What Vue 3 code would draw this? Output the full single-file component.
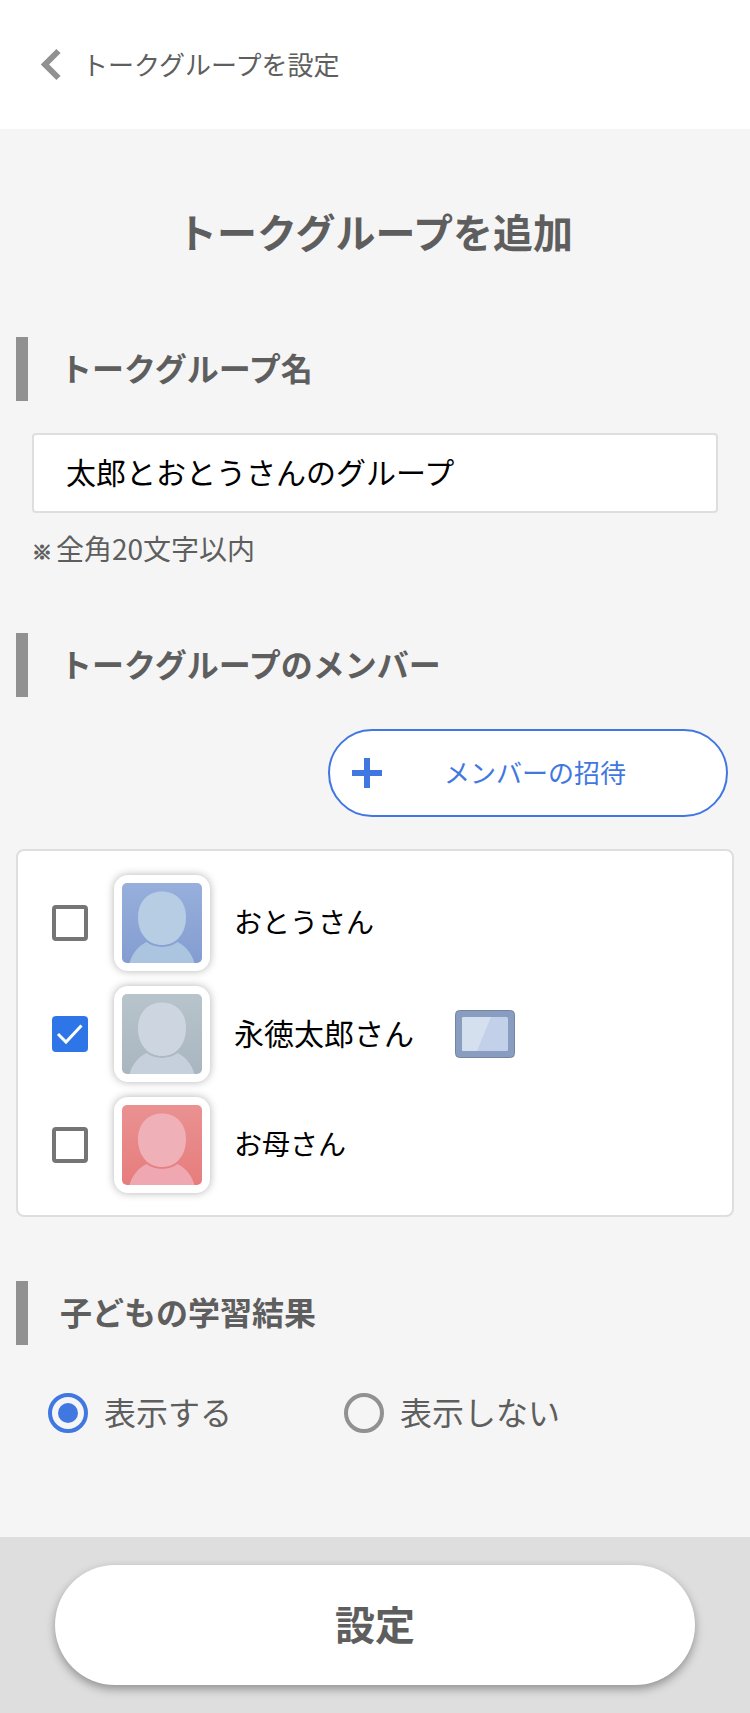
<script setup>
import { ref } from 'vue'

const groupName = ref('太郎とおとうさんのグループ')
const visibility = ref('show')
const members = ref([
  { id: 'father', name: 'おとうさん', checked: false, child: false, top: '#97afdb', bottom: '#849dd1', head: '#b6cde4', body: '#abc5e0' },
  { id: 'taro', name: '永徳太郎さん', checked: true, child: true, top: '#b8c4cc', bottom: '#a9b6bf', head: '#ccd5e0', body: '#c6d0dc' },
  { id: 'mother', name: 'お母さん', checked: false, child: false, top: '#ea9192', bottom: '#e67d7c', head: '#efb0b8', body: '#efa8b1' },
])
</script>

<template>
  <div class="page">
    <header class="topbar">
      <a class="back" href="#">
        <svg class="back-icon" viewBox="0 0 20 32" aria-hidden="true">
          <path d="M18.500 3 5 16.500l13.500 13.500" fill="none" stroke="#919191" stroke-width="6" />
        </svg>
        <span>トークグループを設定</span>
      </a>
    </header>

    <main class="content">
      <h1 class="title">トークグループを追加</h1>

      <section>
        <h2 class="heading"><label for="group-name">トークグループ名</label></h2>
        <div class="field">
          <input id="group-name" v-model="groupName" class="text-input" type="text" maxlength="20" />
          <p class="note"><span class="mark">※</span><span>全角20文字以内</span></p>
        </div>
      </section>

      <section class="members-section">
        <h2 class="heading">トークグループのメンバー</h2>
        <button class="invite" type="button">
          <svg class="plus" viewBox="0 0 30 30" aria-hidden="true">
            <path d="M12 0h6v12h12v6H18v12h-6V18H0v-6h12z" fill="#4177e1" />
          </svg>
          <span class="invite-label">メンバーの招待</span>
        </button>
        <ul class="members">
          <li v-for="m in members" :key="m.id" class="member">
            <input :id="m.id" v-model="m.checked" class="check" type="checkbox" />
            <label class="member-label" :for="m.id">
              <span class="avatar">
                <svg viewBox="0 0 80 80" aria-hidden="true">
                  <defs>
                    <linearGradient :id="`${m.id}-bg`" x1="0" y1="0" x2="0" y2="1">
                      <stop offset="0" :stop-color="m.top" />
                      <stop offset="1" :stop-color="m.bottom" />
                    </linearGradient>
                  </defs>
                  <rect width="80" height="80" rx="5" :fill="`url(#${m.id}-bg)`" />
                  <path d="M40 8.500C54 8.500 64 18.500 64 34C64 52 53 62 40 62S16 52 16 34C16 18.500 26 8.500 40 8.500z" :fill="m.head" />
                  <path d="M7.500 80C10 71 16 63 24.500 59c9 6.500 22 6.500 31 0C64 63 70 71 72.500 80z" :fill="m.body" />
                </svg>
              </span>
              <span class="name" :class="{ 'name-child': m.child }">{{ m.name }}</span>
            </label>
            <svg v-if="m.child" class="tablet" viewBox="0 0 60 48" role="img" aria-label="タブレット">
              <rect x="0.500" y="0.500" width="59" height="47" rx="4" fill="#889dbf" stroke="#74869f" />
              <rect x="7" y="7" width="46" height="34" rx="1.500" fill="#c2d1e9" />
              <path d="M8.500 7H36L22 41H8.500Q7 41 7 39.500v-31Q7 7 8.500 7z" fill="#d5e0ee" />
            </svg>
          </li>
        </ul>
      </section>

      <section class="result-section">
        <h2 id="result-heading" class="heading">子どもの学習結果</h2>
        <div class="radios" role="radiogroup" aria-labelledby="result-heading">
          <label class="radio"><input v-model="visibility" type="radio" name="visibility" value="show" /><span>表示する</span></label>
          <label class="radio"><input v-model="visibility" type="radio" name="visibility" value="hide" /><span>表示しない</span></label>
        </div>
      </section>
    </main>

    <footer class="footer">
      <button class="submit" type="button">設定</button>
    </footer>
  </div>
</template>

<style>
body {
  margin: 0;
  background: #f5f5f5;
}
</style>

<style scoped>
.page {
  display: flex;
  flex-direction: column;
  min-height: 100vh;
  color: #5e5e5e;
  background: #f5f5f5;
  font-family: "Noto Sans CJK JP", sans-serif;
}
.page * {
  box-sizing: border-box;
}
.page button,
.page input {
  font-family: inherit;
}
.topbar {
  padding: 44px 40px 45px;
  background: #fff;
}
.back {
  display: flex;
  align-items: center;
  gap: 22px;
  color: inherit;
  font-size: 26px;
  line-height: 40px;
  text-decoration: none;
}
.back-icon {
  width: 20px;
  height: 32px;
  overflow: visible;
}
.content {
  flex: 1;
  padding: 72px 16px 104px;
}
.title {
  margin: 0 0 76px;
  font-size: 40px;
  line-height: 60px;
  text-align: center;
}
.heading {
  margin: 0;
  padding: 0 0 4px 32px;
  border-left: 12px solid #919191;
  font-size: 32px;
  line-height: 60px;
}
.field {
  padding: 32px 16px 0;
}
.text-input {
  display: block;
  width: 100%;
  height: 80px;
  margin: 0;
  padding: 0 32px 4px;
  border: 2px solid #dedede;
  border-radius: 4px;
  background: #fff;
  color: #000;
  font-size: 30px;
}
.note {
  display: flex;
  align-items: baseline;
  gap: 4px;
  margin: 14px 0 0;
  font-size: 28px;
  line-height: 42px;
}
.mark {
  font-size: 20px;
  line-height: 20px;
  -webkit-text-stroke: 1px currentColor;
}
.members-section {
  margin-top: 64px;
}
.invite {
  display: flex;
  align-items: center;
  width: 400px;
  height: 88px;
  margin: 32px 6px 32px auto;
  padding: 0 22px;
  border: 2px solid #4177e1;
  border-radius: 44px;
  background: #fff;
  color: #4177e1;
  font-size: 26px;
}
.plus {
  width: 30px;
  height: 30px;
}
.invite-label {
  flex: 1;
  padding: 0 16px 4px 0;
  text-align: center;
}
.members {
  display: grid;
  gap: 15px;
  margin: 0;
  padding: 24px 34px 22px;
  border: 2px solid #dedede;
  border-radius: 8px;
  background: #fff;
  list-style: none;
}
.member {
  display: flex;
  align-items: center;
}
.member-label {
  display: flex;
  align-items: center;
  gap: 24px;
  margin-left: 26px;
  color: #000;
  font-size: 28px;
}
.check {
  appearance: none;
  width: 36px;
  height: 36px;
  margin: 0;
  border: 4px solid #757575;
  border-radius: 4px;
  background: #fff;
}
.check:checked {
  border: 0;
  background: #2e75e8 url("data:image/svg+xml,%3Csvg xmlns='http://www.w3.org/2000/svg' viewBox='0 0 36 36'%3E%3Cpath d='M6 18l8 8L29.500 9.500' fill='none' stroke='white' stroke-width='3'/%3E%3C/svg%3E") center / 100% 100%;
}
.avatar {
  display: block;
  width: 96px;
  height: 96px;
  padding: 8px;
  border-radius: 14px;
  background: #fff;
  box-shadow: 0 0 8px rgba(0, 0, 0, 0.3);
}
.avatar svg {
  display: block;
}
.name {
  padding-bottom: 4px;
}
.name-child {
  font-size: 30px;
}
.tablet {
  width: 60px;
  height: 48px;
  margin-left: 41px;
}
.result-section {
  margin-top: 64px;
}
.radios {
  display: flex;
  gap: 112px;
  margin-top: 48px;
  padding-left: 32px;
}
.radio {
  display: flex;
  align-items: center;
  gap: 16px;
  height: 40px;
  font-size: 32px;
  line-height: 40px;
}
.radio span {
  padding-bottom: 4px;
}
.radio input {
  appearance: none;
  width: 40px;
  height: 40px;
  margin: 0;
  border: 4px solid #919191;
  border-radius: 50%;
}
.radio input:checked {
  padding: 6px;
  border-color: #4177e1;
  background: #4177e1 content-box;
}
.footer {
  padding: 28px 55px;
  background: #dedede;
}
.submit {
  display: block;
  width: 100%;
  height: 120px;
  margin: 0;
  padding: 0 0 4px;
  border: 0;
  border-radius: 60px;
  background: #fff;
  box-shadow: 0 4px 10px rgba(0, 0, 0, 0.35);
  color: #5e5e5e;
  font-size: 40px;
  font-weight: 700;
}
</style>
